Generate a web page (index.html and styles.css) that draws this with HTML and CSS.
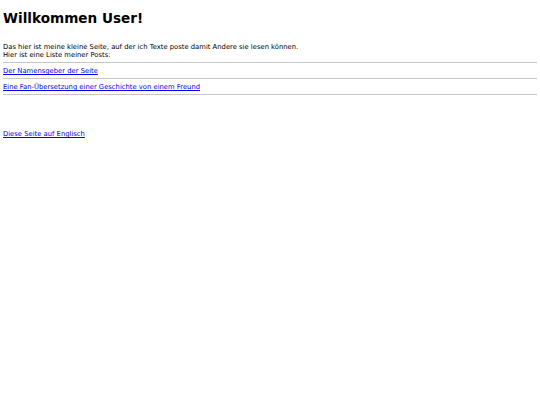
FILE: index.html
```html
<!DOCTYPE html>
<html lang="de">
<head>
<meta charset="utf-8">
<link rel="stylesheet" href="styles.css">
</head>
<body>
<h1 class="title">Willkommen User!</h1>
<p class="intro">Das hier ist meine kleine Seite, auf der ich Texte poste damit Andere sie lesen können.<br>Hier ist eine Liste meiner Posts:</p>
<hr class="rule">
<a class="post" href="#">Der Namensgeber der Seite</a>
<hr class="rule">
<a class="post" href="#">Eine Fan-Übersetzung einer Geschichte von einem Freund</a>
<hr class="rule">
<div class="spacer"></div>
<a class="post" href="#">Diese Seite auf Englisch</a>
</body>
</html>
```
FILE: styles.css
```css
html { background: #fff; }
body {
  margin: 0 3px;
  padding-top: 10px;
  font-family: "DejaVu Sans", Verdana, sans-serif;
  font-size: 6.8px;
  line-height: 8px;
  color: #000;
}
.title {
  font-size: 13.6px;
  line-height: 16px;
  font-weight: bold;
  margin: 0;
}
.intro {
  margin: 17px 0 1px;
}
.rule {
  border: none;
  border-top: 1px solid #c6c6c6;
  margin: 3px 0 4px;
  height: 0;
}
.post {
  display: block;
  color: #0000ee;
  text-decoration: underline;
}
.spacer { height: 31px; }
```
